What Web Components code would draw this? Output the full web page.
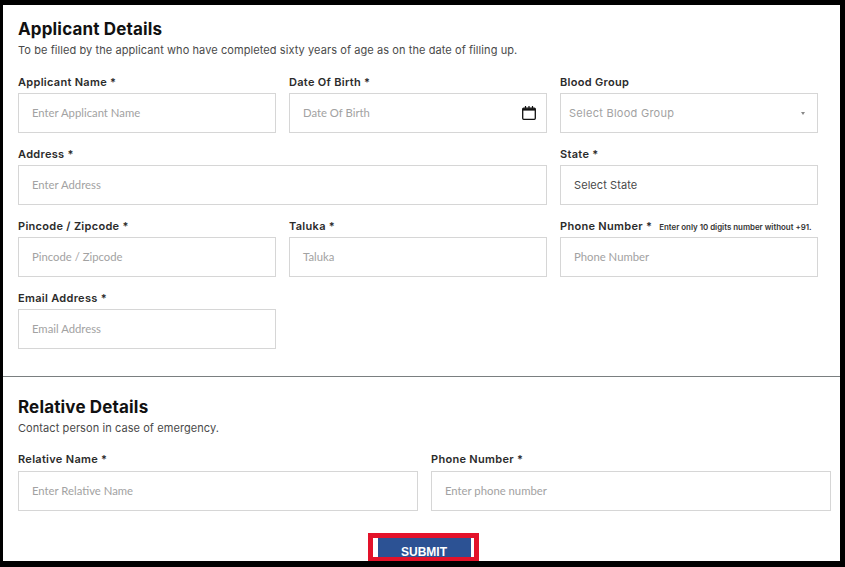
<!DOCTYPE html>
<html><head><meta charset="utf-8"><style>
html,body{margin:0;padding:0;background:#000;height:567px;overflow:hidden}
body{font-family:Inter,"Liberation Sans",sans-serif}
</style></head><body>
<template id="t-panel"><style>
:host{display:block;width:837px;height:556px;margin:5px 0 0 3px;background:#fff;overflow:hidden;box-sizing:border-box}
</style><slot></slot></template>
<template id="t-section"><style>
:host{display:block;padding:var(--ptop,14px) 10px 0 15px}
h2{margin:0;font:700 17px/20px Inter,sans-serif;color:#111;letter-spacing:.16px}
p{margin:4px 0 0;font:400 11px/14px Inter,sans-serif;color:#4a4a4a;letter-spacing:.08px}
.grid{display:grid;grid-template-columns:var(--cols);column-gap:13px;row-gap:14px;margin-top:var(--gtop,18px)}
</style><h2></h2><p></p><div class="grid"><slot></slot></div></template>
<template id="t-field"><style>
:host{display:flex;flex-direction:column;min-width:0}
:host([wide]){grid-column:span 2}
.l{display:flex;align-items:baseline;height:var(--lh,17px);font:600 11px/14px Inter,sans-serif;color:#2b2b2b;white-space:nowrap;letter-spacing:.3px;margin-bottom:1px}
.h{font:600 7.9px/10px Inter,sans-serif;margin-left:7px;letter-spacing:0;color:#333}
.b{height:40px;box-sizing:border-box;border:1px solid #d6d6d6;display:flex;align-items:center;justify-content:space-between;padding:0 10px 0 13px;font:400 11.3px/14px Lato,"Open Sans",sans-serif;color:#a2a2a2}
:host([select]) .b{padding:0 12px 0 8px;font:400 11px/14px Inter,sans-serif;letter-spacing:.27px}
:host([value]) .b{color:#4a4a4a;font:400 11px/14px Inter,sans-serif;letter-spacing:.08px}
svg{display:block;flex:none}
</style><div class="l"><span class="n"></span><span class="h"></span></div><div class="b"><span class="v"></span><slot></slot></div></template>
<template id="t-submit"><style>
:host{display:flex;justify-content:center;margin:22px 0 0 3px}
.o{box-sizing:border-box;width:111px;height:28px;border:5px solid #e3122a;border-bottom-width:4px;background:#fff;padding:0 3px 0 5px;display:flex}
.i{flex:1;background:#2c5294;color:#fff;font:700 12px/28px "Liberation Sans",Arial,sans-serif;text-align:center;overflow:hidden}
</style><div class="o"><div class="i"><slot></slot></div></div></template>
<app-panel>
<form-section heading="Applicant Details" sub="To be filled by the applicant who have completed sixty years of age as on the date of filling up." cols="258px 258px 258px">
<form-field label="Applicant Name *" ph="Enter Applicant Name"></form-field>
<form-field label="Date Of Birth *" ph="Date Of Birth"><svg width="14" height="14" viewBox="0 0 14 14" fill="none" stroke="#111"><rect x=".7" y="2.2" width="12.600" height="11.100" rx="1" stroke-width="1.3"/><path d="M.7 3.500h12.600" stroke-width="2.2"/><path d="M3.500 0v2.500M7 0v2.500M10.500 0v2.500" stroke-width="1.2"/></svg></form-field>
<form-field label="Blood Group" ph="Select Blood Group" select><svg width="4" height="3" viewBox="0 0 4 3"><path d="M0 0h4L2 3z" fill="#888"/></svg></form-field>
<form-field label="Address *" ph="Enter Address" wide></form-field>
<form-field label="State *" ph="Select State" value></form-field>
<form-field label="Pincode / Zipcode *" ph="Pincode / Zipcode"></form-field>
<form-field label="Taluka *" ph="Taluka"></form-field>
<form-field label="Phone Number *" hint="Enter only 10 digits number without +91." ph="Phone Number"></form-field>
<form-field label="Email Address *" ph="Email Address"></form-field>
</form-section>
<app-rule></app-rule>
<form-section style="--ptop:20px;--lh:18px" heading="Relative Details" sub="Contact person in case of emergency." cols="400px 400px" gtop="17px">
<form-field label="Relative Name *" ph="Enter Relative Name"></form-field>
<form-field label="Phone Number *" ph="Enter phone number"></form-field>
</form-section>
<submit-button>SUBMIT</submit-button>
</app-panel>
<script>
function mk(name,id,init){customElements.define(name,class extends HTMLElement{constructor(){super();const s=this.attachShadow({mode:'open'});s.appendChild(document.getElementById(id).content.cloneNode(true));}connectedCallback(){init&&init.call(this,this.shadowRoot)}})}
mk('app-panel','t-panel');
mk('submit-button','t-submit');
customElements.define('app-rule',class extends HTMLElement{constructor(){super();this.attachShadow({mode:'open'}).innerHTML='<style>:host{display:block;height:1px;background:#7a7f80;margin-top:27px}</style>'}});
mk('form-section','t-section',function(s){s.querySelector('h2').textContent=this.getAttribute('heading');s.querySelector('p').textContent=this.getAttribute('sub');const g=s.querySelector('.grid');g.style.setProperty('--cols',this.getAttribute('cols'));if(this.hasAttribute('gtop'))g.style.setProperty('--gtop',this.getAttribute('gtop'))});
mk('form-field','t-field',function(s){s.querySelector('.n').textContent=this.getAttribute('label');const h=this.getAttribute('hint');s.querySelector('.h').textContent=h||'';s.querySelector('.v').textContent=this.getAttribute('ph')});
</script>
</body></html>
